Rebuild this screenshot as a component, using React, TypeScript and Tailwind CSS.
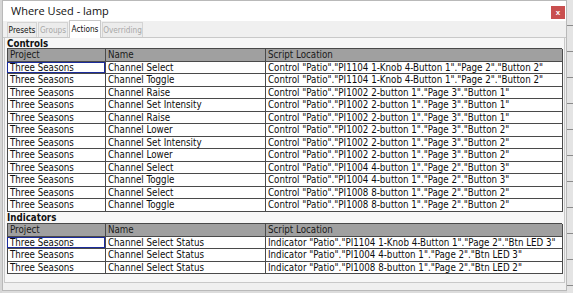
const controls: [string, string][] = [
  ['Channel Select', 'Control "Patio"."PI1104 1-Knob 4-Button 1"."Page 2"."Button 2"'],
  ['Channel Toggle', 'Control "Patio"."PI1104 1-Knob 4-Button 1"."Page 2"."Button 2"'],
  ['Channel Raise', 'Control "Patio"."PI1002 2-button 1"."Page 3"."Button 1"'],
  ['Channel Set Intensity', 'Control "Patio"."PI1002 2-button 1"."Page 3"."Button 1"'],
  ['Channel Raise', 'Control "Patio"."PI1002 2-button 1"."Page 3"."Button 1"'],
  ['Channel Lower', 'Control "Patio"."PI1002 2-button 1"."Page 3"."Button 2"'],
  ['Channel Set Intensity', 'Control "Patio"."PI1002 2-button 1"."Page 3"."Button 2"'],
  ['Channel Lower', 'Control "Patio"."PI1002 2-button 1"."Page 3"."Button 2"'],
  ['Channel Select', 'Control "Patio"."PI1004 4-button 1"."Page 2"."Button 3"'],
  ['Channel Toggle', 'Control "Patio"."PI1004 4-button 1"."Page 2"."Button 3"'],
  ['Channel Select', 'Control "Patio"."PI1008 8-button 1"."Page 2"."Button 2"'],
  ['Channel Toggle', 'Control "Patio"."PI1008 8-button 1"."Page 2"."Button 2"'],
];

const indicators: [string, string][] = [
  ['Channel Select Status', 'Indicator "Patio"."PI1104 1-Knob 4-Button 1"."Page 2"."Btn LED 3"'],
  ['Channel Select Status', 'Indicator "Patio"."PI1004 4-button 1"."Page 2"."Btn LED 3"'],
  ['Channel Select Status', 'Indicator "Patio"."PI1008 8-button 1"."Page 2"."Btn LED 2"'],
];

const cols = 'grid grid-cols-[98px_160px_297px]';
const cell = 'border-r border-b border-[#4a4a4a] pl-[2px] leading-[12px] whitespace-nowrap overflow-hidden';

function Grid({ rows }: { rows: [string, string][] }) {
  return (
    <div className="w-[555px] border-l border-t border-[#4a4a4a] text-[#0c0c0c]">
      <div className={`${cols} h-[12.5px] bg-[#a0a0a0] text-[#1a1a1a]`}>
        <div className={cell}>Project</div>
        <div className={cell}>Name</div>
        <div className={cell}>Script Location</div>
      </div>
      {rows.map(([name, loc], i) => (
        <div key={i} className={`${cols} h-[12.5px] bg-white`}>
          <div className={`${cell} ${i === 0 ? 'shadow-[inset_0_0_0_1px_#1c2c9c] -ml-px pl-[3px]' : ''}`}>
            Three Seasons
          </div>
          <div className={cell}>{name}</div>
          <div className={cell}>{loc}</div>
        </div>
      ))}
    </div>
  );
}

function Tab({ label, w, active, disabled }: { label: string; w: string; active?: boolean; disabled?: boolean }) {
  if (active) {
    return (
      <div className={`${w} h-[18px] -mb-px flex items-center justify-center border border-b-0 border-[#c9c9c9] bg-white text-[#111] relative z-10`}>
        {label}
      </div>
    );
  }
  return (
    <div
      className={`${w} h-[15px] flex items-center justify-center border border-b-0 border-[#d4d4d4] bg-[#ececec] ${
        disabled ? 'text-[#a8a8a8]' : 'text-[#111]'
      }`}
    >
      {label}
    </div>
  );
}

export default function App() {
  return (
    <div className="w-[573px] h-[293px] flex bg-[#dcdcdc] overflow-hidden">
      <div className="w-[2px] h-full bg-[#d6d6d6]" />
      <div className="w-[565px] h-[291px] flex flex-col bg-[#f0f0f0] border border-[#b9b9b9]">
        <div className="h-[20px] flex items-center justify-between bg-white pl-[8px] pr-[1px]">
          <span className="text-[11px] text-[#111] font-['Open_Sans',sans-serif]">Where Used - lamp</span>
          <div className="w-[14px] h-[13px] mt-[3px] bg-[#c94f4f] flex items-center justify-center text-white text-[8px] leading-none font-bold font-['Liberation_Sans',sans-serif]">
            x
          </div>
        </div>
        <div className="h-[17px] flex items-end gap-px pl-[4px] text-[8.2px] font-['DejaVu_Sans_Condensed','DejaVu_Sans',sans-serif] border-b border-[#c9c9c9]">
          <Tab label="Presets" w="w-[30px]" />
          <Tab label="Groups" w="w-[30px]" disabled />
          <Tab label="Actions" w="w-[32px]" active />
          <Tab label="Overriding" w="w-[41px]" disabled />
        </div>
        <div className="flex-1 mx-[1px] mb-[7px] px-[2px] bg-[#f7f7f7] border border-t-0 border-[#c9c9c9] font-['DejaVu_Sans_Condensed','DejaVu_Sans',sans-serif] text-[9.7px]">
          <div className="h-[10px] leading-[11px] font-bold text-[#111]">Controls</div>
          <Grid rows={controls} />
          <div className="h-[11.5px] leading-[12px] font-bold text-[#111]">Indicators</div>
          <Grid rows={indicators} />
        </div>
      </div>
      <div className="flex-1 flex flex-col bg-[#e4e4e4]">
        {[0, 1, 2, 3, 4, 5, 6, 7, 8, 9, 10].map((i) => (
          <div key={i} className="h-[26px] border-b border-[#8a8a8a]" />
        ))}
      </div>
    </div>
  );
}
